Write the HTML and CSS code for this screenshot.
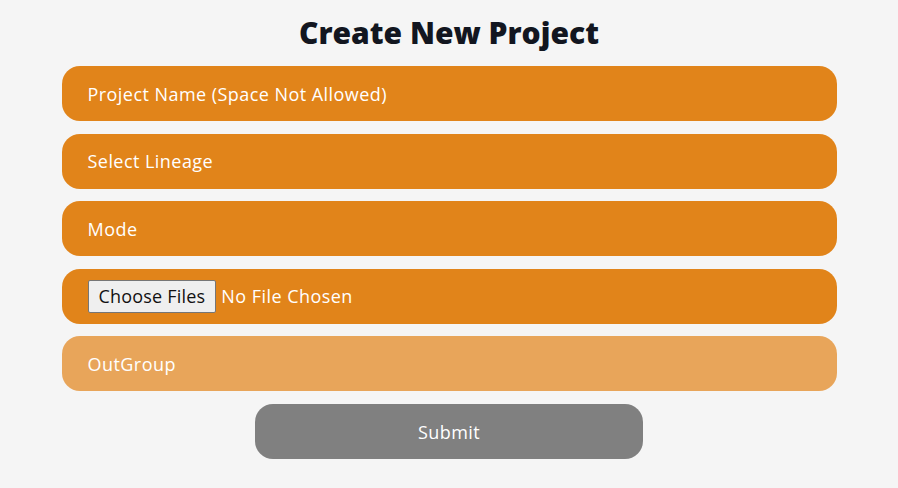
FILE: index.html
```html
<!DOCTYPE html>
<html lang="en">
<head>
<meta charset="utf-8">
<title>Create New Project</title>
<link rel="stylesheet" href="styles.css">
</head>
<body>
<main class="page">
  <h1 class="title">Create New Project</h1>
  <form class="form">
    <input class="field" type="text" placeholder="Project Name (Space Not Allowed)">
    <div class="field field-select">Select Lineage</div>
    <div class="field field-select">Mode</div>
    <label class="field field-file">
      <span class="file-btn">Choose Files</span>
      <span class="file-text">No File Chosen</span>
    </label>
    <div class="field field-disabled">OutGroup</div>
    <button class="submit" type="button">Submit</button>
  </form>
</main>
</body>
</html>
```

FILE: styles.css
```css
* { box-sizing: border-box; }
body {
  margin: 0;
  background: #f5f5f5;
  font-family: "Open Sans", "Noto Sans", sans-serif;
}
.page {
  width: 775px;
  margin: 0 auto;
  padding-top: 15px;
}
.title {
  margin: 0 0 15px;
  text-align: center;
  font-size: 30px;
  line-height: 36px;
  font-weight: 800;
  color: #121620;
}
.form {
  display: flex;
  flex-direction: column;
  gap: 12.5px;
}
.field {
  display: flex;
  align-items: center;
  height: 55px;
  width: 100%;
  padding: 0 26px;
  border: none;
  border-radius: 18px;
  background: #e1841a;
  color: #ffffff;
  font-family: inherit;
  font-size: 18px;
  letter-spacing: 0.45px;
  outline: none;
}
.field::placeholder { color: #ffffff; opacity: 1; }
.field-disabled { background: #e8a55a; }
.file-btn {
  display: inline-flex;
  align-items: center;
  height: 33px;
  padding: 0 10px;
  background: #efefef;
  border: 1px solid #767676;
  border-radius: 2px;
  color: #111111;
  font-size: 18px;
  letter-spacing: 0.2px;
}
.file-text { margin-left: 5px; }
.submit {
  align-self: center;
  width: 388px;
  height: 55px;
  margin-top: 0.5px;
  border: none;
  border-radius: 18px;
  background: #808080;
  color: #ffffff;
  font-family: inherit;
  font-size: 18px;
  letter-spacing: 0.45px;
}
```
